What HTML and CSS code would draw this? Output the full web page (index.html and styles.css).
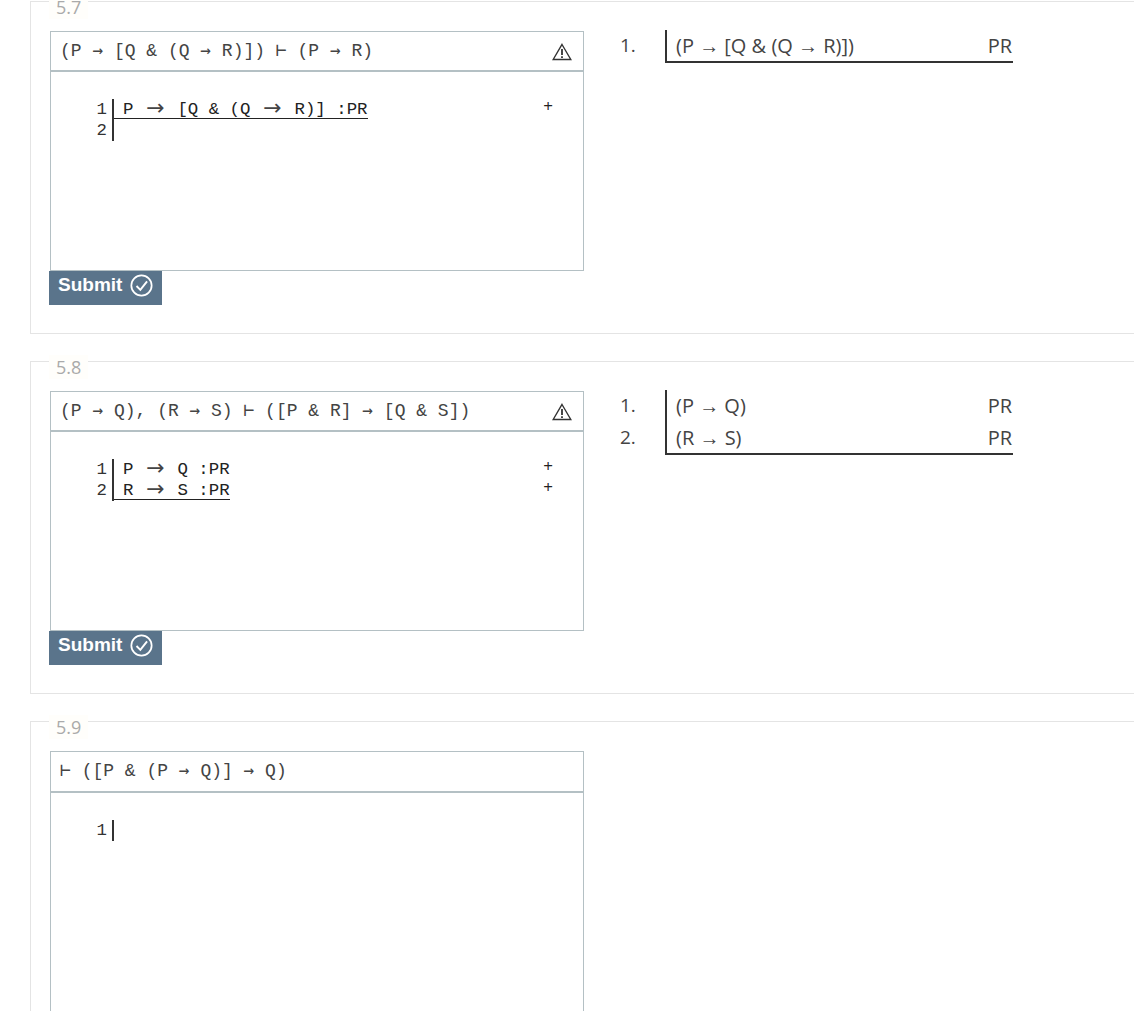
FILE: index.html
```html
<!DOCTYPE html>
<html lang="en">
<head>
<meta charset="UTF-8">
<meta name="viewport" content="width=device-width, initial-scale=1.0">
<title>Problems</title>
<link rel="stylesheet" href="styles.css">
</head>
<body>
    <div class="problem">
        <span class="legend">5.7</span>
        <div class="solver">
            <div class="card">
                <div class="card-head">
                    <span>(P <b>→</b> [Q &amp; (Q <b>→</b> R)]) ⊢ (P <b>→</b> R)</span>
                    <svg class="warn" viewBox="0 0 20 18" width="20" height="18"><path d="M10 1.5 L18.8 16.5 H1.2 Z" fill="none" stroke="#333" stroke-width="1.4"/><path d="M10 6 V12 M10 13.2 V15" stroke="#333" stroke-width="1.8"/></svg>
                </div>
                <div class="editor">
                    <div class="row">
                        <span class="num">1</span>
                        <span class="line"><span class="text last">P<i>→</i>[Q &amp; (Q<i>→</i>R)] :PR</span></span>
                        <span class="plus">+</span>
                    </div>
                    <div class="row">
                        <span class="num">2</span>
                        <span class="line"></span>
                    </div>
                </div>
            </div>
            <button class="submit">Submit <svg viewBox="0 0 24 24" width="23" height="23"><circle cx="12" cy="12" r="10.6" fill="none" stroke="#fff" stroke-width="1.8"/><path d="M6.8 12.5 L10.8 16.5 L17.8 7.6" fill="none" stroke="#fff" stroke-width="2"/></svg></button>
        </div>
        <div class="proof">
            <div class="proof-row">
                <span class="proof-num">1.</span>
                <div class="proof-line last"><span>(P → [Q &amp; (Q → R)])</span><span>PR</span></div>
            </div>
        </div>
    </div>

    <div class="problem">
        <span class="legend">5.8</span>
        <div class="solver">
            <div class="card">
                <div class="card-head">
                    <span>(P <b>→</b> Q), (R <b>→</b> S) ⊢ ([P &amp; R] <b>→</b> [Q &amp; S])</span>
                    <svg class="warn" viewBox="0 0 20 18" width="20" height="18"><path d="M10 1.5 L18.8 16.5 H1.2 Z" fill="none" stroke="#333" stroke-width="1.4"/><path d="M10 6 V12 M10 13.2 V15" stroke="#333" stroke-width="1.8"/></svg>
                </div>
                <div class="editor">
                    <div class="row">
                        <span class="num">1</span>
                        <span class="line"><span class="text">P<i>→</i>Q :PR</span></span>
                        <span class="plus">+</span>
                    </div>
                    <div class="row">
                        <span class="num">2</span>
                        <span class="line"><span class="text last">R<i>→</i>S :PR</span></span>
                        <span class="plus">+</span>
                    </div>
                </div>
            </div>
            <button class="submit">Submit <svg viewBox="0 0 24 24" width="23" height="23"><circle cx="12" cy="12" r="10.6" fill="none" stroke="#fff" stroke-width="1.8"/><path d="M6.8 12.5 L10.8 16.5 L17.8 7.6" fill="none" stroke="#fff" stroke-width="2"/></svg></button>
        </div>
        <div class="proof">
            <div class="proof-row">
                <span class="proof-num">1.</span>
                <div class="proof-line"><span>(P → Q)</span><span>PR</span></div>
            </div>
            <div class="proof-row">
                <span class="proof-num">2.</span>
                <div class="proof-line last"><span>(R → S)</span><span>PR</span></div>
            </div>
        </div>
    </div>

    <div class="problem">
        <span class="legend">5.9</span>
        <div class="solver">
            <div class="card tall">
                <div class="card-head">
                    <span>⊢ ([P &amp; (P <b>→</b> Q)] <b>→</b> Q)</span>
                </div>
                <div class="editor">
                    <div class="row">
                        <span class="num">1</span>
                        <span class="line"></span>
                    </div>
                </div>
            </div>
        </div>
    </div>
</body>
</html>
```

FILE: styles.css
```css
html, body {
    overflow: hidden;
}

body {
    font-family: "Open Sans", Arial, sans-serif;
    margin: 0;
    padding: 1px 0 0 30px;
    width: 1300px;
    height: 1011px;
    box-sizing: border-box;
    background-color: #fff;
    color: #333;
}

.problem {
    position: relative;
    display: flex;
    border: 1px solid #e4e4e4;
    height: 333px;
    box-sizing: border-box;
    margin-bottom: 27px;
    padding: 29px 0 0 18px;
}

.legend {
    position: absolute;
    top: -7px;
    left: 18px;
    padding: 0 7px;
    height: 24px;
    line-height: 24px;
    font-size: 18px;
    color: #aaa;
    background-color: #fffefb;
}

.solver {
    width: 535px;
    margin-right: 36px;
}

.card {
    width: 534px;
    height: 240px;
    border: 1px solid #b4c0c4;
    box-sizing: border-box;
    margin-left: 1px;
    font-family: "Liberation Mono", monospace;
}

.card.tall {
    height: 400px;
}

.card-head {
    display: flex;
    justify-content: space-between;
    align-items: center;
    padding: 0 11px 3px 9px;
    height: 35px;
    border-bottom: 2px solid #b4c0c4;
    font-size: 18px;
    color: #444;
}

.card.tall .card-head {
    height: 36px;
}

.card-head b {
    font-family: "DejaVu Sans Mono", monospace;
    font-weight: normal;
    font-size: 17.8px;
}

.warn {
    margin-top: 4px;
}

.editor {
    padding: 27px 30px 0 30px;
    font-size: 17.4px;
    color: #222;
}

.row {
    display: flex;
    height: 21px;
    line-height: 21px;
}

.num {
    width: 26px;
    text-align: right;
    color: #333;
}

.line {
    margin-left: 5px;
    border-left: 2px solid #333;
    display: flex;
    align-items: flex-start;
}

.text {
    height: 20px;
    box-sizing: border-box;
    padding-left: 9px;
    white-space: pre;
}

.text i {
    display: inline-block;
    width: 44px;
    text-align: center;
    font-family: "DejaVu Sans", sans-serif;
    font-style: normal;
    font-size: 22px;
    line-height: 0;
    vertical-align: -1px;
    color: #444;
}

.text.last {
    border-bottom: 1px solid #222;
}

.plus {
    margin-left: auto;
    margin-top: -4px;
    font-family: "Open Sans", Arial, sans-serif;
    font-size: 17px;
    color: #222;
}

.submit {
    display: flex;
    align-items: center;
    gap: 8px;
    width: 113px;
    height: 34px;
    padding: 0 0 6px 9px;
    border: none;
    background-color: #5a748b;
    color: #fff;
    font-family: "Liberation Sans", Arial, sans-serif;
    font-weight: bold;
    font-size: 19px;
}

.proof {
    margin-top: -1px;
    font-size: 20px;
    color: #444;
}

.proof-row {
    display: flex;
    height: 32px;
    line-height: 32px;
}

.proof-num {
    width: 45px;
    font-size: 19px;
    line-height: 31px;
}

.proof-line {
    display: flex;
    justify-content: space-between;
    width: 348px;
    padding: 0 1px 0 9px;
    box-sizing: border-box;
    border-left: 2px solid #333;
}

.proof-line.last {
    border-bottom: 2px solid #333;
    height: 33px;
}
```
